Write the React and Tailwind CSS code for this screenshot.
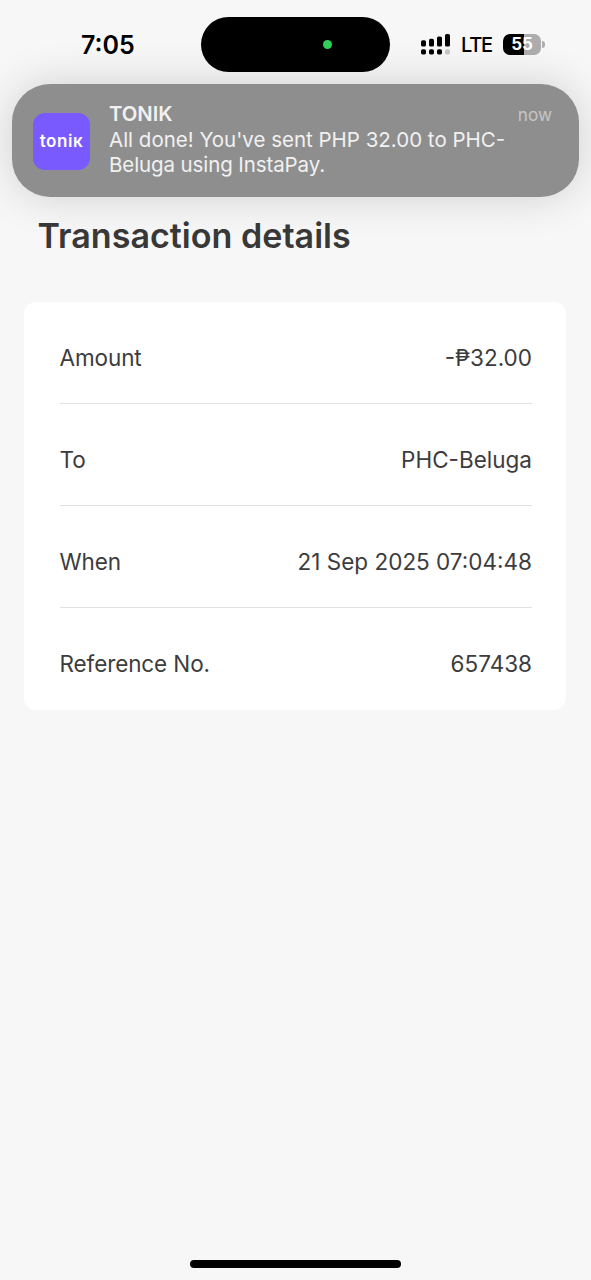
import React from "react";
import clsx from "clsx";

const details = [
  { label: "Amount", value: "-₱32.00" },
  { label: "To", value: "PHC-Beluga" },
  { label: "When", value: "21 Sep 2025 07:04:48" },
  { label: "Reference No.", value: "657438" },
];

function SignalIcon() {
  return (
    <svg width="30" height="21" viewBox="0 0 30 21" fill="black">
      <rect x="0" y="6.3" width="5" height="6.2" rx="1.6" />
      <rect x="8" y="4.8" width="5" height="7.7" rx="1.6" />
      <rect x="16" y="2.5" width="5" height="10" rx="1.6" />
      <rect x="24" y="0" width="5" height="12.5" rx="1.6" />
      <rect x="0" y="15.2" width="5" height="5.2" rx="1.6" />
      <rect x="8" y="15.2" width="5" height="5.2" rx="1.6" />
      <rect x="16" y="15.2" width="5" height="5.2" rx="1.6" />
      <rect x="24" y="15.2" width="5" height="5.2" rx="1.6" fill="#c6c6c6" />
    </svg>
  );
}

function Battery() {
  return (
    <div className="flex items-center gap-px">
      <div className="flex h-[21px] w-[38px] items-center justify-center overflow-hidden rounded-[7px] bg-linear-to-r from-black from-55% to-[#adadad] to-55%">
        <span className="text-[17px] leading-none font-bold text-white">55</span>
      </div>
      <div className="h-[7px] w-[2.5px] rounded-r-full bg-[#adadad]" />
    </div>
  );
}

function StatusBar() {
  return (
    <div className="flex h-[84px] pt-[17px]">
      <div className="flex h-[55px] w-[201px] items-center pl-[81px]">
        <span className="pt-px text-[25px] leading-none font-semibold">7:05</span>
      </div>
      <div className="flex h-[55px] w-[189px] items-center rounded-full bg-black pl-[122px]">
        <div className="size-[9px] rounded-full bg-[#30d158]" />
      </div>
      <div className="flex h-[55px] items-center pl-[31px]">
        <SignalIcon />
        <span className="ml-[10px] w-[42px] text-[20px] leading-none font-medium tracking-[-1.2px]">
          LTE
        </span>
        <Battery />
      </div>
    </div>
  );
}

function Notification() {
  return (
    <div className="mx-3 flex h-[113px] w-[567px] rounded-[38px] bg-[#8e8e8e] pl-[21px] shadow-[0_0_44px_rgba(0,0,0,0.16)]">
      <div className="mt-[28.5px] flex size-[57px] items-center justify-center rounded-[12px] bg-[#785aff]">
        <span className="text-[17px] leading-none font-semibold tracking-[0.6px] text-white">
          toniк
        </span>
      </div>
      <div className="ml-[19px] w-[443px] pt-[17px] text-[20.5px] leading-[25.5px] text-[#f1f1f1]">
        <div className="flex justify-between">
          <span className="text-[20.3px] font-semibold">TONIK</span>
          <span className="pt-px text-[17.2px] text-[#c6c6c6]">now</span>
        </div>
        <p className="-mt-px whitespace-nowrap">
          All done! You've sent PHP 32.00 to PHC-
          <br />
          <span className="tracking-[-0.1px]">Beluga using InstaPay.</span>
        </p>
      </div>
    </div>
  );
}

export default function App() {
  return (
    <div className="flex h-[1280px] w-[591px] flex-col overflow-hidden bg-[#f7f7f7] font-['Inter',sans-serif] text-black">
      <StatusBar />
      <Notification />
      <main className="flex-1 px-6">
        <h1 className="mt-[18px] ml-[13.5px] text-[34.1px] leading-[42px] font-semibold text-[#383838]">
          Transaction details
        </h1>
        <div className="mt-[45px] w-[542px] rounded-[12px] bg-white pr-[34px] pl-[35.5px]">
          {details.map((item, i) => (
            <div
              key={item.label}
              className={clsx(
                "flex h-[102px] items-center justify-between pt-[10px] text-[22.5px] text-[#3c3c3c]",
                i < details.length - 1 && "border-b border-[#e0e0e0]"
              )}
            >
              <span className="tracking-[-0.1px]">{item.label}</span>
              <span>{item.value}</span>
            </div>
          ))}
        </div>
      </main>
      <div className="mx-auto mb-3 h-2 w-[211px] rounded-full bg-black" />
    </div>
  );
}
